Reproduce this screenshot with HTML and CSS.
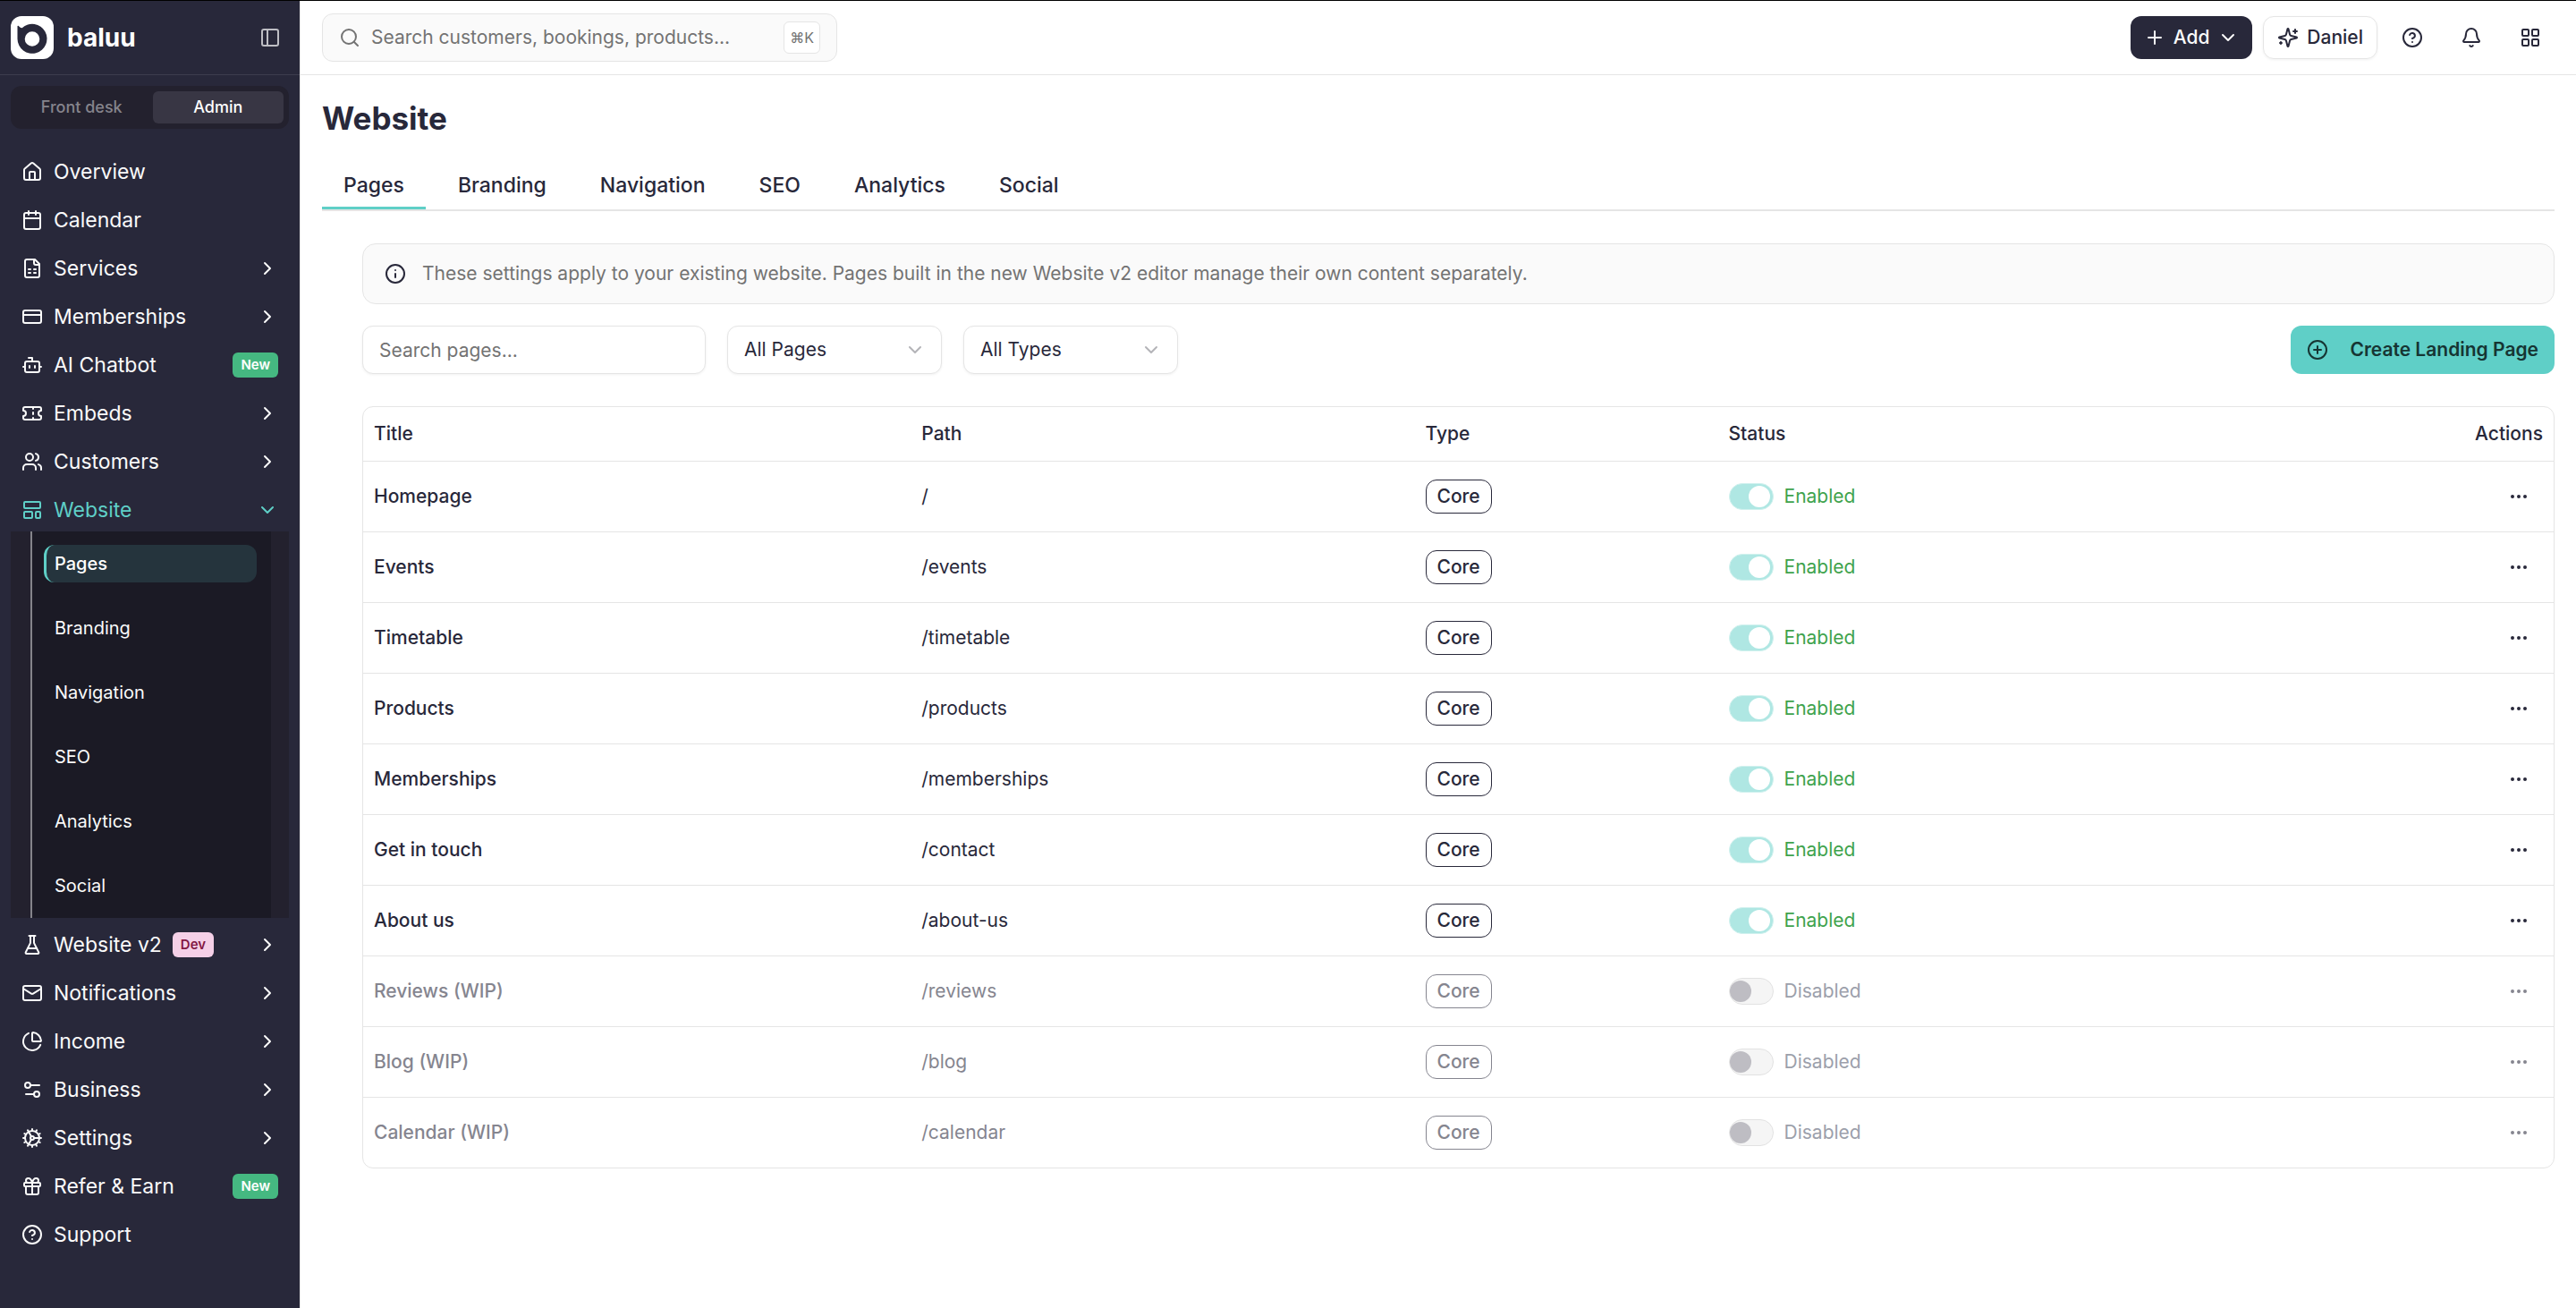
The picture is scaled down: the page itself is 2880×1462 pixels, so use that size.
FILE: index.html
```html
<!DOCTYPE html>
<html lang="en">
<head>
    <meta charset="UTF-8">
    <meta name="viewport" content="width=device-width, initial-scale=1.0">
    <title>Website - baluu</title>
    <link rel="stylesheet" href="styles.css">
</head>
<body>

    <!-- Icon sprite -->
    <svg class="sprite" aria-hidden="true">
        <symbol id="i-panel" viewBox="0 0 24 24"><rect x="3" y="3" width="18" height="18" rx="2"/><path d="M9 3v18"/></symbol>
        <symbol id="i-home" viewBox="0 0 24 24"><path d="M15 21v-8a1 1 0 0 0-1-1h-4a1 1 0 0 0-1 1v8"/><path d="M3 10a2 2 0 0 1 .709-1.528l7-5.999a2 2 0 0 1 2.582 0l7 5.999A2 2 0 0 1 21 10v9a2 2 0 0 1-2 2H5a2 2 0 0 1-2-2z"/></symbol>
        <symbol id="i-calendar" viewBox="0 0 24 24"><path d="M8 2v4M16 2v4M3 10h18"/><rect x="3" y="4" width="18" height="18" rx="2"/></symbol>
        <symbol id="i-file" viewBox="0 0 24 24"><path d="M15 2H6a2 2 0 0 0-2 2v16a2 2 0 0 0 2 2h12a2 2 0 0 0 2-2V7Z"/><path d="M14 2v4a2 2 0 0 0 2 2h4M8 13h2M14 13h2M8 17h2M14 17h2"/></symbol>
        <symbol id="i-card" viewBox="0 0 24 24"><rect x="2" y="5" width="20" height="14" rx="2"/><path d="M2 10h20"/></symbol>
        <symbol id="i-bot" viewBox="0 0 24 24"><path d="M12 8V4H8"/><rect x="4" y="8" width="16" height="12" rx="2"/><path d="M2 14h2M20 14h2M15 13v2M9 13v2"/></symbol>
        <symbol id="i-ticket" viewBox="0 0 24 24"><path d="M2 9a3 3 0 0 1 0 6v2a2 2 0 0 0 2 2h16a2 2 0 0 0 2-2v-2a3 3 0 0 1 0-6V7a2 2 0 0 0-2-2H4a2 2 0 0 0-2 2Z"/><path d="M13 5v2M13 17v2M13 11v2"/></symbol>
        <symbol id="i-users" viewBox="0 0 24 24"><path d="M16 21v-2a4 4 0 0 0-4-4H6a4 4 0 0 0-4 4v2"/><circle cx="9" cy="7" r="4"/><path d="M22 21v-2a4 4 0 0 0-3-3.87M16 3.13a4 4 0 0 1 0 7.75"/></symbol>
        <symbol id="i-template" viewBox="0 0 24 24"><rect x="3" y="3" width="18" height="7" rx="1"/><rect x="3" y="14" width="9" height="7" rx="1"/><rect x="16" y="14" width="5" height="7" rx="1"/></symbol>
        <symbol id="i-flask" viewBox="0 0 24 24"><path d="M10 2v7.527a2 2 0 0 1-.211.896L4.72 20.55a1 1 0 0 0 .9 1.45h12.76a1 1 0 0 0 .9-1.45l-5.069-10.127A2 2 0 0 1 14 9.527V2"/><path d="M8.5 2h7M7 16h10"/></symbol>
        <symbol id="i-mail" viewBox="0 0 24 24"><rect x="2" y="4" width="20" height="16" rx="2"/><path d="m22 7-8.97 5.7a1.94 1.94 0 0 1-2.06 0L2 7"/></symbol>
        <symbol id="i-pie" viewBox="0 0 24 24"><path d="M21 12c.552 0 1.005-.449.95-.998a10 10 0 0 0-8.953-8.951c-.55-.055-.998.398-.998.95v8a1 1 0 0 0 1 1z"/><path d="M21.21 15.89A10 10 0 1 1 8 2.83"/></symbol>
        <symbol id="i-sliders" viewBox="0 0 24 24"><path d="M20 7h-9M14 17H5"/><circle cx="17" cy="17" r="3"/><circle cx="7" cy="7" r="3"/></symbol>
        <symbol id="i-cog" viewBox="0 0 24 24"><path d="M12 20a8 8 0 1 0 0-16 8 8 0 0 0 0 16Z"/><path d="M12 14a2 2 0 1 0 0-4 2 2 0 0 0 0 4Z"/><path d="M12 2v2M12 22v-2M17 20.66l-1-1.73M11 10.27 7 3.34M20.66 17l-1.73-1M3.34 7l1.73 1M14 12h8M2 12h2M20.66 7l-1.73 1M3.34 17l1.73-1M17 3.34l-1 1.73M11 13.73l-4 6.93"/></symbol>
        <symbol id="i-gift" viewBox="0 0 24 24"><rect x="3" y="8" width="18" height="4" rx="1"/><path d="M12 8v13M19 12v7a2 2 0 0 1-2 2H7a2 2 0 0 1-2-2v-7M7.5 8a2.5 2.5 0 0 1 0-5A4.8 8 0 0 1 12 8a4.8 8 0 0 1 4.5-5 2.5 2.5 0 0 1 0 5"/></symbol>
        <symbol id="i-help" viewBox="0 0 24 24"><circle cx="12" cy="12" r="10"/><path d="M9.09 9a3 3 0 0 1 5.83 1c0 2-3 3-3 3M12 17h.01"/></symbol>
        <symbol id="i-right" viewBox="0 0 24 24"><path d="m9 18 6-6-6-6"/></symbol>
        <symbol id="i-down" viewBox="0 0 24 24"><path d="m6 9 6 6 6-6"/></symbol>
        <symbol id="i-search" viewBox="0 0 24 24"><circle cx="11" cy="11" r="8"/><path d="m21 21-4.3-4.3"/></symbol>
        <symbol id="i-plus" viewBox="0 0 24 24"><path d="M5 12h14M12 5v14"/></symbol>
        <symbol id="i-sparkles" viewBox="0 0 24 24"><path d="M9.937 15.5A2 2 0 0 0 8.5 14.063l-6.135-1.582a.5.5 0 0 1 0-.962L8.5 9.936A2 2 0 0 0 9.937 8.5l1.582-6.135a.5.5 0 0 1 .963 0L14.063 8.5A2 2 0 0 0 15.5 9.937l6.135 1.581a.5.5 0 0 1 0 .964L15.5 14.063a2 2 0 0 0-1.437 1.437l-1.582 6.135a.5.5 0 0 1-.963 0z"/><path d="M20 3v4M22 5h-4M4 17v2M5 18H3"/></symbol>
        <symbol id="i-bell" viewBox="0 0 24 24"><path d="M10.268 21a2 2 0 0 0 3.464 0"/><path d="M3.262 15.326A1 1 0 0 0 4 17h16a1 1 0 0 0 .74-1.673C19.41 13.956 18 12.499 18 8A6 6 0 0 0 6 8c0 4.499-1.411 5.956-2.738 7.326"/></symbol>
        <symbol id="i-grid" viewBox="0 0 24 24"><rect x="3" y="3" width="7" height="7" rx="1"/><rect x="14" y="3" width="7" height="7" rx="1"/><rect x="14" y="14" width="7" height="7" rx="1"/><rect x="3" y="14" width="7" height="7" rx="1"/></symbol>
        <symbol id="i-info" viewBox="0 0 24 24"><circle cx="12" cy="12" r="10"/><path d="M12 16v-4M12 8h.01"/></symbol>
        <symbol id="i-plus-circle" viewBox="0 0 24 24"><circle cx="12" cy="12" r="10"/><path d="M8 12h8M12 8v8"/></symbol>
        <symbol id="i-dots" viewBox="0 0 24 24"><circle cx="12" cy="12" r="1"/><circle cx="19" cy="12" r="1"/><circle cx="5" cy="12" r="1"/></symbol>
    </svg>

    <!-- Sidebar -->
    <aside class="sidebar">
        <div class="brand">
            <svg class="brand-logo" viewBox="0 0 48 48" aria-hidden="true">
                <rect width="48" height="48" rx="12" fill="#fff"/>
                <path fill="#28283a" fill-rule="evenodd" d="M7.500 11.500c0-.8.7-.9 1.200-.4 1.200 1.200 2.300 2.200 4 2.100A16.500 16.500 0 1 1 7.500 25.500ZM24 17.200a8.300 8.300 0 1 0 0 16.600 8.300 8.300 0 0 0 0-16.600Z"/>
            </svg>
            <span class="brand-name">baluu</span>
            <button class="collapse" aria-label="Toggle sidebar"><svg class="icon"><use href="#i-panel"/></svg></button>
        </div>

        <div class="mode">
            <button class="mode-btn">Front desk</button>
            <button class="mode-btn active">Admin</button>
        </div>

        <nav class="nav">
            <a class="nav-item" href="#"><svg class="icon"><use href="#i-home"/></svg>Overview</a>
            <a class="nav-item" href="#"><svg class="icon"><use href="#i-calendar"/></svg>Calendar</a>
            <button class="nav-item"><svg class="icon"><use href="#i-file"/></svg>Services<svg class="icon arrow"><use href="#i-right"/></svg></button>
            <button class="nav-item"><svg class="icon"><use href="#i-card"/></svg>Memberships<svg class="icon arrow"><use href="#i-right"/></svg></button>
            <a class="nav-item" href="#"><svg class="icon"><use href="#i-bot"/></svg>AI Chatbot<span class="tag tag-new">New</span></a>
            <button class="nav-item"><svg class="icon"><use href="#i-ticket"/></svg>Embeds<svg class="icon arrow"><use href="#i-right"/></svg></button>
            <button class="nav-item"><svg class="icon"><use href="#i-users"/></svg>Customers<svg class="icon arrow"><use href="#i-right"/></svg></button>
            <div class="nav-group">
                <button class="nav-item current" aria-expanded="true"><svg class="icon"><use href="#i-template"/></svg>Website<svg class="icon arrow"><use href="#i-down"/></svg></button>
                <div class="subnav">
                    <div class="subnav-list">
                        <a class="sub-item active" href="#">Pages</a>
                        <a class="sub-item" href="#">Branding</a>
                        <a class="sub-item" href="#">Navigation</a>
                        <a class="sub-item" href="#">SEO</a>
                        <a class="sub-item" href="#">Analytics</a>
                        <a class="sub-item" href="#">Social</a>
                    </div>
                </div>
            </div>
            <button class="nav-item"><svg class="icon"><use href="#i-flask"/></svg>Website v2<span class="tag tag-dev">Dev</span><svg class="icon arrow"><use href="#i-right"/></svg></button>
            <button class="nav-item"><svg class="icon"><use href="#i-mail"/></svg>Notifications<svg class="icon arrow"><use href="#i-right"/></svg></button>
            <button class="nav-item"><svg class="icon"><use href="#i-pie"/></svg>Income<svg class="icon arrow"><use href="#i-right"/></svg></button>
            <button class="nav-item"><svg class="icon"><use href="#i-sliders"/></svg>Business<svg class="icon arrow"><use href="#i-right"/></svg></button>
            <button class="nav-item"><svg class="icon"><use href="#i-cog"/></svg>Settings<svg class="icon arrow"><use href="#i-right"/></svg></button>
            <a class="nav-item" href="#"><svg class="icon"><use href="#i-gift"/></svg>Refer &amp; Earn<span class="tag tag-new">New</span></a>
            <a class="nav-item" href="#"><svg class="icon"><use href="#i-help"/></svg>Support</a>
        </nav>
    </aside>

    <div class="main">
        <!-- Top bar -->
        <header class="topbar">
            <label class="search">
                <svg class="icon"><use href="#i-search"/></svg>
                <input type="search" placeholder="Search customers, bookings, products..." aria-label="Search customers, bookings, products">
                <kbd>⌘K</kbd>
            </label>
            <div class="topbar-actions">
                <button class="btn btn-dark"><svg class="icon"><use href="#i-plus"/></svg>Add<svg class="icon"><use href="#i-down"/></svg></button>
                <button class="btn btn-outline"><svg class="icon"><use href="#i-sparkles"/></svg>Daniel</button>
                <button class="icon-btn" aria-label="Help"><svg class="icon"><use href="#i-help"/></svg></button>
                <button class="icon-btn" aria-label="Notifications"><svg class="icon"><use href="#i-bell"/></svg></button>
                <button class="icon-btn" aria-label="Apps"><svg class="icon"><use href="#i-grid"/></svg></button>
            </div>
        </header>

        <main class="content">
            <h1>Website</h1>

            <nav class="tabs">
                <a class="tab active" href="#">Pages</a>
                <a class="tab" href="#">Branding</a>
                <a class="tab" href="#">Navigation</a>
                <a class="tab" href="#">SEO</a>
                <a class="tab" href="#">Analytics</a>
                <a class="tab" href="#">Social</a>
            </nav>

            <section class="panel">
                <div class="notice">
                    <svg class="icon"><use href="#i-info"/></svg>
                    <p>These settings apply to your existing website. Pages built in the new Website v2 editor manage their own content separately.</p>
                </div>

                <div class="filters">
                    <input class="field field-search" type="text" placeholder="Search pages..." aria-label="Search pages">
                    <div class="select">
                        <select class="field" aria-label="Filter by status"><option>All Pages</option></select>
                        <svg class="icon"><use href="#i-down"/></svg>
                    </div>
                    <div class="select">
                        <select class="field" aria-label="Filter by type"><option>All Types</option></select>
                        <svg class="icon"><use href="#i-down"/></svg>
                    </div>
                    <button class="create"><svg class="icon"><use href="#i-plus-circle"/></svg>Create Landing Page</button>
                </div>

                <div class="table-wrap">
                    <table>
                        <thead>
                            <tr>
                                <th class="col-title">Title</th>
                                <th class="col-path">Path</th>
                                <th class="col-type">Type</th>
                                <th>Status</th>
                                <th class="col-actions">Actions</th>
                            </tr>
                        </thead>
                        <tbody>
                            <tr>
                                <td class="title">Homepage</td>
                                <td>/</td>
                                <td><span class="badge">Core</span></td>
                                <td><label class="status"><input class="switch" type="checkbox" checked disabled>Enabled</label></td>
                                <td class="col-actions"><button class="more" aria-label="Actions for Homepage"><svg class="icon"><use href="#i-dots"/></svg></button></td>
                            </tr>
                            <tr>
                                <td class="title">Events</td>
                                <td>/events</td>
                                <td><span class="badge">Core</span></td>
                                <td><label class="status"><input class="switch" type="checkbox" checked disabled>Enabled</label></td>
                                <td class="col-actions"><button class="more" aria-label="Actions for Events"><svg class="icon"><use href="#i-dots"/></svg></button></td>
                            </tr>
                            <tr>
                                <td class="title">Timetable</td>
                                <td>/timetable</td>
                                <td><span class="badge">Core</span></td>
                                <td><label class="status"><input class="switch" type="checkbox" checked disabled>Enabled</label></td>
                                <td class="col-actions"><button class="more" aria-label="Actions for Timetable"><svg class="icon"><use href="#i-dots"/></svg></button></td>
                            </tr>
                            <tr>
                                <td class="title">Products</td>
                                <td>/products</td>
                                <td><span class="badge">Core</span></td>
                                <td><label class="status"><input class="switch" type="checkbox" checked disabled>Enabled</label></td>
                                <td class="col-actions"><button class="more" aria-label="Actions for Products"><svg class="icon"><use href="#i-dots"/></svg></button></td>
                            </tr>
                            <tr>
                                <td class="title">Memberships</td>
                                <td>/memberships</td>
                                <td><span class="badge">Core</span></td>
                                <td><label class="status"><input class="switch" type="checkbox" checked disabled>Enabled</label></td>
                                <td class="col-actions"><button class="more" aria-label="Actions for Memberships"><svg class="icon"><use href="#i-dots"/></svg></button></td>
                            </tr>
                            <tr>
                                <td class="title">Get in touch</td>
                                <td>/contact</td>
                                <td><span class="badge">Core</span></td>
                                <td><label class="status"><input class="switch" type="checkbox" checked disabled>Enabled</label></td>
                                <td class="col-actions"><button class="more" aria-label="Actions for Get in touch"><svg class="icon"><use href="#i-dots"/></svg></button></td>
                            </tr>
                            <tr>
                                <td class="title">About us</td>
                                <td>/about-us</td>
                                <td><span class="badge">Core</span></td>
                                <td><label class="status"><input class="switch" type="checkbox" checked disabled>Enabled</label></td>
                                <td class="col-actions"><button class="more" aria-label="Actions for About us"><svg class="icon"><use href="#i-dots"/></svg></button></td>
                            </tr>
                            <tr class="off">
                                <td class="title">Reviews (WIP)</td>
                                <td>/reviews</td>
                                <td><span class="badge">Core</span></td>
                                <td><label class="status"><input class="switch" type="checkbox" disabled>Disabled</label></td>
                                <td class="col-actions"><button class="more" aria-label="Actions for Reviews"><svg class="icon"><use href="#i-dots"/></svg></button></td>
                            </tr>
                            <tr class="off">
                                <td class="title">Blog (WIP)</td>
                                <td>/blog</td>
                                <td><span class="badge">Core</span></td>
                                <td><label class="status"><input class="switch" type="checkbox" disabled>Disabled</label></td>
                                <td class="col-actions"><button class="more" aria-label="Actions for Blog"><svg class="icon"><use href="#i-dots"/></svg></button></td>
                            </tr>
                            <tr class="off">
                                <td class="title">Calendar (WIP)</td>
                                <td>/calendar</td>
                                <td><span class="badge">Core</span></td>
                                <td><label class="status"><input class="switch" type="checkbox" disabled>Disabled</label></td>
                                <td class="col-actions"><button class="more" aria-label="Actions for Calendar"><svg class="icon"><use href="#i-dots"/></svg></button></td>
                            </tr>
                        </tbody>
                    </table>
                </div>
            </section>
        </main>
    </div>

</body>
</html>
```
FILE: styles.css
```css
* {
    box-sizing: border-box;
}
body {
    display: flex;
    min-height: 100vh;
    margin: 0;
    border-top: 1px solid #000;
    background-color: #fff;
    color: #28283a;
    font-family: Inter, sans-serif;
    font-size: 21px;
    line-height: 30px;
}
button, input, select, kbd {
    font: inherit;
    color: inherit;
}
button {
    padding: 0;
    border: none;
    background: none;
    cursor: pointer;
}
a {
    color: inherit;
    text-decoration: none;
}
.sprite {
    position: absolute;
    width: 0;
    height: 0;
}
.icon {
    flex: none;
    width: 24px;
    height: 24px;
    fill: none;
    stroke: currentColor;
    stroke-width: 2;
    stroke-linecap: round;
    stroke-linejoin: round;
}

/* Sidebar */
.sidebar {
    flex: none;
    width: 336px;
    border-right: 1px solid #e5e5e5;
    background-color: #28283a;
    color: #fafafa;
}
.brand {
    display: flex;
    align-items: center;
    gap: 15px;
    height: 83px;
    padding: 0 21px 0 12px;
    border-bottom: 1px solid #3d3d4e;
}
.brand-logo {
    width: 48px;
    height: 48px;
}
.brand-name {
    font-size: 28px;
    font-weight: 700;
    color: #fff;
}
.collapse {
    display: flex;
    margin-left: auto;
    color: #bebec4;
}
.mode {
    display: flex;
    gap: 6px;
    margin: 12px;
    padding: 6px;
    border-radius: 12px;
    background-color: #23212e;
}
.mode-btn {
    flex: 1;
    height: 36px;
    border-radius: 6px;
    font-size: 18px;
    font-weight: 500;
    color: #85848c;
}
.mode-btn.active {
    background-color: #383644;
    color: #fff;
}
.nav {
    display: flex;
    flex-direction: column;
    gap: 6px;
    padding: 12px;
}
.nav-item {
    display: flex;
    align-items: center;
    gap: 12px;
    width: 100%;
    height: 48px;
    padding: 0 12px;
    font-size: 23px;
    text-align: left;
}
.nav-item.current {
    color: #5fcfc7;
}
.arrow, .tag-new {
    margin-left: auto;
}
.tag {
    padding: 0 9px;
    border-radius: 6px;
    font-size: 15px;
    font-weight: 600;
    line-height: 28px;
}
.tag-new {
    background-color: #45b881;
    color: #fff;
}
.tag-dev {
    background-color: #f5d0e7;
    color: #831843;
}
.subnav {
    padding: 0 20px 0 22px;
    background-color: #23212e;
}
.subnav-list {
    display: flex;
    flex-direction: column;
    gap: 30px;
    padding: 15px 16px 15px 13px;
    border-left: 2px solid #85848a;
    background-color: #1b1a25;
}
.sub-item {
    padding: 6px 9px;
    border-left: 3px solid transparent;
    border-radius: 12px;
    font-size: 20px;
}
.sub-item.active {
    border-color: #5fcfc7;
    background-color: #25343d;
    font-weight: 500;
    color: #fff;
}

/* Top bar */
.main {
    flex: 1;
    min-width: 0;
}
.topbar {
    display: flex;
    align-items: center;
    justify-content: space-between;
    height: 83px;
    padding: 0 24px;
    border-bottom: 1px solid #e5e5e5;
}
.search {
    display: flex;
    align-items: center;
    gap: 12px;
    width: 576px;
    height: 54px;
    padding: 0 18px;
    border: 1px solid #e5e5e5;
    border-radius: 12px;
    background-color: #fafafa;
    color: #737373;
}
.search input {
    flex: 1;
    min-width: 0;
    padding: 0;
    border: none;
    outline: none;
    background: none;
}
input::placeholder {
    color: #737373;
    opacity: 1;
}
kbd {
    padding: 2px 6px;
    border: 1px solid #e5e5e5;
    border-radius: 6px;
    background-color: #fff;
    font-size: 16px;
}
.topbar-actions {
    display: flex;
    align-items: center;
    gap: 12px;
}
.btn {
    display: flex;
    align-items: center;
    gap: 9px;
    height: 48px;
    padding: 0 15px;
    border-radius: 12px;
    font-weight: 500;
}
.btn-dark {
    background-color: #28283a;
    color: #fafafa;
}
.btn-outline {
    border: 1px solid #e5e5e5;
    box-shadow: 0 1px 3px rgba(0, 0, 0, 0.06);
}
.icon-btn {
    display: flex;
    align-items: center;
    justify-content: center;
    width: 54px;
    height: 48px;
}

/* Page content */
.content {
    padding: 27px 24px;
}
h1 {
    margin: 0 0 24px;
    font-size: 35px;
    font-weight: 700;
    line-height: 42px;
}
.tabs {
    display: flex;
    gap: 12px;
    border-bottom: 2px solid #e5e5e5;
}
.tab {
    padding: 15px 24px 9px;
    border-bottom: 3px solid transparent;
    font-size: 23px;
    font-weight: 500;
}
.tab.active {
    border-color: #5fcfc7;
}
.panel {
    padding: 36px 0 0 45px;
}
.notice {
    display: flex;
    align-items: center;
    gap: 18px;
    padding: 18px 24px;
    border: 1px solid #e5e5e5;
    border-radius: 15px;
    background-color: #fafafa;
}
.notice p {
    margin: 0;
    color: #737373;
}
.filters {
    display: flex;
    gap: 24px;
    margin: 24px 0 36px;
}
.field {
    width: 100%;
    height: 54px;
    padding: 0 18px;
    border: 1px solid #e5e5e5;
    border-radius: 12px;
    background-color: #fff;
    box-shadow: 0 1px 3px rgba(0, 0, 0, 0.06);
    appearance: none;
}
.field-search {
    width: 384px;
}
.select {
    display: grid;
    align-items: center;
    width: 240px;
}
.select > * {
    grid-area: 1 / 1;
}
.select .icon {
    justify-self: end;
    margin-right: 18px;
    color: #b4b4b8;
    pointer-events: none;
}
.create {
    display: flex;
    align-items: center;
    gap: 24px;
    height: 54px;
    margin-left: auto;
    padding: 0 18px;
    border-radius: 12px;
    background-color: #5fcfc7;
    color: #163533;
    font-weight: 600;
}

/* Pages table */
.table-wrap {
    border: 1px solid #e5e5e5;
    border-radius: 12px;
}
table {
    width: 100%;
    border-collapse: collapse;
    table-layout: fixed;
}
th, td {
    padding: 0 12px;
    text-align: left;
}
th {
    height: 60px;
    font-weight: 500;
}
td {
    height: 79px;
    border-top: 1px solid #e5e5e5;
}
.col-title {
    width: 25%;
}
.col-path {
    width: 23%;
}
.col-type {
    width: 339px;
}
.col-actions {
    text-align: right;
}
.title {
    font-weight: 500;
}
.badge {
    display: inline-block;
    padding: 3px 12px;
    border: 1px solid #28283a;
    border-radius: 12px;
    font-weight: 500;
}
.status {
    display: flex;
    align-items: center;
    gap: 12px;
    color: #3fa34d;
}
.switch {
    display: flex;
    align-items: center;
    width: 50px;
    height: 30px;
    margin: 0;
    border: 1px solid #e2e2e2;
    border-radius: 15px;
    background-color: #f5f5f5;
    appearance: none;
}
.switch::before {
    content: "";
    width: 24px;
    height: 24px;
    border-radius: 50%;
    background-color: #bebdc3;
}
.switch:checked {
    justify-content: flex-end;
    padding-right: 3px;
    border-color: #d0f1ee;
    background-color: #afe7e3;
}
.switch:checked::before {
    background-color: #fff;
}
.more {
    display: inline-flex;
    align-items: center;
    justify-content: center;
    width: 54px;
    height: 48px;
    vertical-align: middle;
}
.off {
    color: #85858f;
}
.off .status {
    color: #9ca0ab;
}
.off .badge {
    border-color: #85858f;
}
```
